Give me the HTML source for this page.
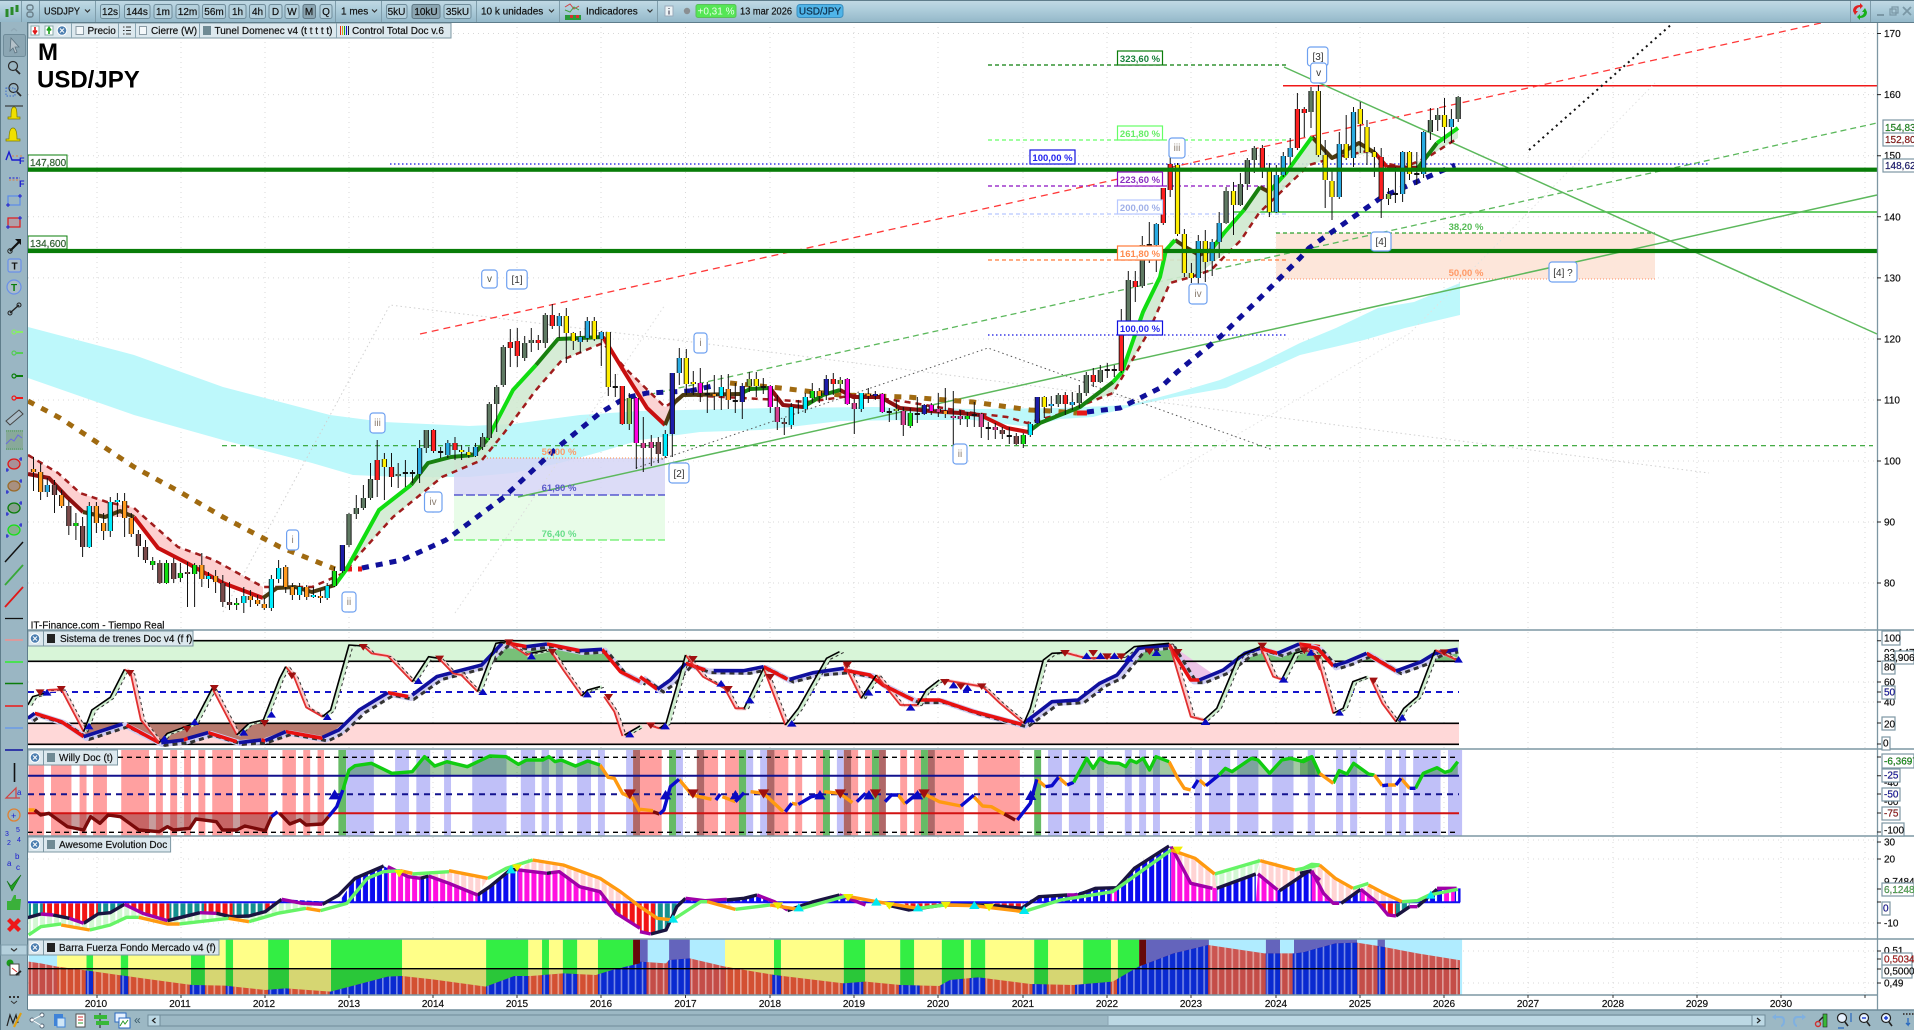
<!DOCTYPE html>
<html><head><meta charset="utf-8"><title>USD/JPY</title>
<style>
html,body{margin:0;padding:0;background:#fff;width:1914px;height:1030px;overflow:hidden}
svg{position:absolute;left:0;top:0;display:block}
svg path,svg polyline,svg line{vector-effect:non-scaling-stroke}
text{font-family:"Liberation Sans",sans-serif;font-size:10px;fill:#111}
.t{text-anchor:middle;stroke:#111;stroke-width:.2}
.a{stroke:#111;stroke-width:.2}
.w{fill:#fff;stroke:#6ea0f0;stroke-width:1.2}
.btn{fill:#b4d0dc;stroke:#6f8c9a;stroke-width:1}
.on{fill:#8ba5b1;stroke:#5f7885;stroke-width:1}
.b{fill:#fff;stroke:#7d97a3;stroke-width:1.2}
.leg{fill:#dce8ee;stroke:#7d97a3;stroke-width:1}
</style></head><body>
<svg width="1914" height="1030" viewBox="0 0 1914 1030" xmlns="http://www.w3.org/2000/svg">
<defs>
<linearGradient id="tb" x1="0" y1="0" x2="0" y2="1"><stop offset="0" stop-color="#c2dae5"/><stop offset=".5" stop-color="#abcbd9"/><stop offset="1" stop-color="#94b8c9"/></linearGradient>
<pattern id="ws" patternUnits="userSpaceOnUse" width="7.02" height="20" x="31"><rect width="2" height="20" fill="#fff"/></pattern>
<pattern id="ws2" patternUnits="userSpaceOnUse" width="7.02" height="20" x="31"><rect width="1.6" height="20" fill="#fff" fill-opacity=".45"/></pattern>
<path id="gg" d="M349 514V545M356.3 508V514M363.4 498V508M370.5 479V498M398.2 474V476M426.3 430V448M482.6 437V447M489.3 404V438M496.7 387V404M503.3 347V385M524.7 343V358M531.3 340V343M545.3 315V343M1058.3 395V404M1079.3 393V403M1086.3 375V393M1100.3 370V382M1128.3 280V321M1142.3 245V286M1226.1 191V223M1240.4 184V205M1247.3 160V184M1254.3 148V160M1311 91V112M1430.4 120V132M1437.7 115V120M1458.2 97V119"/>
<path id="rd" d="M377.2 460V480M391.5 467V477M433.5 430V451M455 443V450M510.3 342V348M517.3 341V356M538.3 340V343M552.3 315V326M622.3 386V424M833.3 379V384M1065.3 395V404M1093.3 375V382M1121.3 330V371M1135.3 281V287M1163.3 188V223M1170.2 164V190M1262.4 148V170M1297.4 109V148M1304.3 109V113M1381.2 157V199"/>
<path id="yl" d="M384.4 459V467M461.6 450V452M468.8 452V455M566.3 316V333M573.3 333V341M594.3 321V339M608.3 332V387M686.3 358V384M693.3 382V384M756.3 379V386M1044.3 397V407M1177.5 165V234M1184.4 234V273M1191.4 273V278M1205.3 241V262M1233.5 191V205M1269.4 171V212M1318.4 91V155M1325.2 155V180M1332 181V197M1346.2 144V158M1360.3 109V124M1367 127V152M1374.4 152V157M1409.5 152V174M1444.5 115V127"/>
<path id="bl" d="M47.3 485V492M419.6 448V474M447.8 443V455M475.5 447V456M559.3 316V326M580.3 337V342M587.3 321V338M601.3 332V339M679.3 358V373M1051.3 404V406M1072.3 402V405M1156.3 224V245M1198.3 241V278M1212.2 242V261M1219.2 223V242M1276.3 175V212M1283.3 156V175M1290.2 148V157M1339.3 144V197M1353.5 112V158M1402.6 152V194M1423.6 132V174M1451.4 119V127"/>
<path id="cy" d="M89.3 506V547M110.3 502V531M117.4 500V502M208.5 576V579M243.8 596V603M271.4 579V608M278.6 568V579M299.6 587V595M313.4 595V597M327.2 586V598M665.3 434V456M721.3 387V396M791.3 407V425M805.3 397V409M861.3 393V409M1030.3 424V435"/>
<path id="br" d="M54.5 485V495M68.8 506V526M82.6 526V547M138.4 534V546M145.5 547V560M159.8 563V583M173.7 563V579M187.5 572V574M222.8 583V602M229.5 602V605M658.3 442V454M784.3 422V424M1002.3 430V434M1016.3 436V444"/>
<path id="og" d="M33.5 469V472M40.6 472V492M61.6 495V506M96.4 506V523M103.6 523V531M124.6 501V518M131.3 518V534M201.8 565V579M215.6 576V582M250.4 596V600M257.6 600V604M264.3 604V608M285.7 567V587M292.4 587V595M306.7 587V597M320.5 596V598M714.3 394V396M728.3 389V400M819.3 391V396M868.3 394V396M945.3 411V414"/>
<path id="gn" d="M75.9 523V526M152.7 561V565M166.5 563V583M180.4 573V578M194.6 565V574M236.6 603V605M334.4 571V586M812.3 391V398M910.3 413V426M967.3 416V419M1023.3 435V444"/>
<path id="pk" d="M643.3 443V448M651.3 442V448M777.3 407V422M854.3 403V409M903.3 411V425M938.3 409V412M953.3 416V418M960.3 416V419M981.3 414V427M995.3 427V430"/>
<path id="mg" d="M636.3 398V443M700.3 383V393M770.3 386V407M847.3 379V404M882.3 394V412M931.3 405V411"/>
<path id="nv" d="M342.4 545V571M672.3 373V434M742.3 386V402M826.3 379V395M875.3 394V396M924.3 405V414M1037.3 397V423"/>
<path id="ol" d="M629.3 398V424M749.3 379V386M840.3 380V384M896.3 409V411M1388.5 194V199"/>
<path id="dj" d="M405.4 472V474M412.5 472V474M440.6 451V453M615.3 386V388M707.3 393V395M735.3 400V402M763.3 386V388M889.3 411V413M917.3 413V415M974.3 414V416M988.3 427V429M1009.3 435V437M1107.3 369V371M1114.3 369V371M1149.3 244V246M1395.4 193V195M1416.8 173V175"/>
<path id="tk4" d="M68 295L85 280 150 305 205 350 300 312 390 368 450 360 510 338 580 365 640 360 700 335 790 355 830 330 880 270 950 218 1000 230 1070 170 1180 135 1230 70 1290 80 1340 72 1420 92 1475 88 1520 155 1568 185"/>
<path id="tk7" d="M0 170L40 208 70 180 105 130 150 150 240 152 285 140 340 178 400 158 470 150 530 165 560 195 630 240 690 240 770 275 880 313 950 245 1010 240 1060 190 1100 165 1150 85 1220 75 1270 180 1290 180 1345 150 1395 100 1430 85 1470 100 1520 72"/>
<path id="tk5" d="M20 75L45 85 85 138 120 125 170 100 205 125 245 153 310 125 345 100 390 88"/>
<path id="r4" d="M115 210L150 208 205 335M305 148L320 160 345 300 390 368M520 205L580 345M700 140L720 170 750 262 790 290M890 78L910 100 950 108 1010 185M1075 115L1110 160 1130 165 1170 215M1240 65L1290 105 1300 100M1350 95L1380 150 1425 228M1480 230L1505 275 1525 348"/>
<path id="k4" d="M68 255L80 230 115 218M205 335L225 270 270 232 305 148M390 368L410 340 450 322 475 310 520 205M580 345L610 310 645 300 685 175 700 140M790 290L810 270 855 75 890 78M1010 185L1050 110 1075 115M1170 215L1215 70 1240 65M1300 100L1340 90M1425 228L1440 210 1470 200M1530 345L1568 318"/>
<path id="r7" d="M20 315L45 325M105 105L120 130 145 170 195 205 220 265 240 265M285 145L335 315M470 130L510 235M545 165L600 255 640 255M700 180L790 200 830 250 885 310M980 98L1030 115 1110 110M1220 70L1270 290 1300 300M1430 80L1460 170 1480 178M1550 90L1568 150"/>
<path id="k7" d="M45 325L60 310 105 105M240 265L285 145M335 315L365 265 430 115 460 95M510 235L545 165M640 255L660 210 690 180M885 310L900 265 930 120 950 100 980 98M1110 110L1140 80 1220 70M1300 300L1330 265 1380 110 1430 80M1480 178L1510 100 1550 85"/>
<path id="r5" d="M0 75L45 115 85 280M180 175L210 250 245 305M345 90L400 120"/>
<path id="k5" d="M85 280L110 265 135 185 170 170M245 305L265 265 300 230 345 90"/>
<clipPath id="env">
<polygon transform="translate(0,620) scale(.40816,.33333)" points="70,1125 70,1025 100,1030 140,1040 215,1052 290,1065 350,1075 470,1095 550,1097 650,1110 700,1105 810,1115 850,1102 950,1070 985,1068 1060,1078 1190,1100 1260,1068 1300,1068 1380,1060 1460,1065 1500,1050 1568,1030 1568,1125"/>
<polygon transform="translate(640,620) scale(.43365,.33333)" points="0,1125 0,1025 60,1030 67,1020 115,1015 196,1040 310,1065 470,1090 520,1085 600,1095 690,1098 715,1080 780,1072 900,1092 1000,1095 1090,1085 1150,1040 1230,1000 1310,975 1440,1000 1510,1000 1568,990 1568,1125"/>
<polygon transform="translate(1300,620) scale(.39154,.33333)" points="0,1125 0,1000 35,988 90,970 145,968 200,978 300,1000 415,1022 415,1125"/>
</clipPath>
</defs>

<!-- grid -->
<g stroke="#d8d8d8" stroke-width="1" stroke-dasharray="1 4" fill="none">
<path d="M28 33.5H1877M28 94.6H1877M28 155.7H1877M28 216.8H1877M28 277.9H1877M28 339H1877M28 400H1877M28 461H1877M28 522H1877M28 583H1877M28 682H1877M28 702H1877M28 840H1877M28 859H1877M28 923H1877M28 951H1877M28 983H1877"/>
<path d="M97 22V995M181 22V995M265 22V995M349 22V995M433 22V995M517 22V995M601 22V995M685.5 22V995M770 22V995M854 22V995M938 22V995M1023 22V995M1107 22V995M1191 22V995M1276 22V995M1360 22V995M1444 22V995M1528 22V995M1613 22V995M1697 22V995M1781 22V995M1865 22V995"/>
</g>

<!-- cloud -->
<polygon fill="#bdf8fb" points="28,327 134,355 223,387 330,415 384,422 469,426 513,424 580,415 640,411 773,408 873,407 973,409 1060,408 1130,405 1175,393 1220,380 1260,363 1300,343 1336,328 1378,308 1414,302 1460,283 1460,315 1405,328 1364,340 1300,355 1260,373 1226,388 1175,397 1137,405 1093,417 1060,419 1030,427 973,420 907,420 840,421 790,427 760,430 700,432 640,440 600,452 560,463 513,473 469,477 400,477 353,475 312,463 223,440 134,415 28,378"/>

<!-- fib boxes -->
<rect x="454" y="458" width="211" height="37" fill="#d6d6f6" fill-opacity=".85"/>
<rect x="454" y="495" width="211" height="45" fill="#e8fce8"/>
<rect x="1276" y="233" width="379" height="46" fill="#fde6da"/>
<g fill="none">
<path d="M454 458H665" stroke="#ff8c40" stroke-dasharray="1 2"/>
<path d="M454 495H665" stroke="#3b3bc8" stroke-width="1.2" stroke-dasharray="9 3"/>
<path d="M454 540H665" stroke="#66ee66" stroke-width="1.2" stroke-dasharray="9 3"/>
<path d="M1276 233H1655" stroke="#2ca02c" stroke-width="1.2" stroke-dasharray="4 3"/>
<path d="M1276 279H1655" stroke="#ff8c60" stroke-dasharray="1 2"/>
<path d="M222 445.7H1873" stroke="#2ca02c" stroke-width="1.2" stroke-dasharray="5 4"/>
<path d="M988 65H1288" stroke="#0b7d0b" stroke-width="1.2" stroke-dasharray="4 3"/>
<path d="M988 140H1288" stroke="#66ff66" stroke-width="1.2" stroke-dasharray="4 3"/>
<path d="M988 186H1288" stroke="#8a0fc0" stroke-width="1.2" stroke-dasharray="4 3"/>
<path d="M988 214H1288" stroke="#b8c8ff" stroke-width="1.2" stroke-dasharray="4 3"/>
<path d="M988 260H1288" stroke="#ff7a3a" stroke-width="1.2" stroke-dasharray="4 3"/>
<path d="M988 335H1288" stroke="#1010e0" stroke-width="1.2" stroke-dasharray="1.5 2.5"/>
<path d="M390 164H1708" stroke="#1010e0" stroke-width="1.2" stroke-dasharray="1.5 2.5"/>
<path d="M1234 212H1877" stroke="#33bb33" stroke-width="1.4"/>
<path d="M1283 85.7H1877" stroke="#f01818" stroke-width="1.5"/>
<!-- faint diagonals -->
<path d="M223 612L390 305L700 343L1709 473" stroke="#d0d0d0" stroke-dasharray="1.5 3"/>
<path d="M455 613L665 305" stroke="#dcdcdc" stroke-dasharray="1.5 3"/>
<path d="M1160 480L1410 333L1655 83" stroke="#e2e2e2" stroke-dasharray="1.5 3"/>
<path d="M636 468L988 348L1273 450" stroke="#555" stroke-dasharray="1.5 3"/>
<path d="M1529 150L1673 23" stroke="#111" stroke-width="2" stroke-dasharray="2 4"/>
<!-- trend lines -->
<path d="M420 334L1821 23" stroke="#ff3838" stroke-width="1.3" stroke-dasharray="7 5"/>
<path d="M620 401L1877 123" stroke="#5cb85c" stroke-width="1.3" stroke-dasharray="6 4"/>
<path d="M518 497L1877 195" stroke="#5cb85c" stroke-width="1.5"/>
<path d="M1284 67L1877 334" stroke="#5cb85c" stroke-width="1.5"/>
</g>

<!-- tunnel fills -->
<polygon fill="#fdd0d0" points="28,455 58,473 80,493 107,502 134,508 178,547 214,560 263,587 263,598 223,583 187,563 158,548 134,517 105,517 83,512 67,497 49,478 28,474"/>
<polygon fill="#cfe9cf" fill-opacity=".85" points="346,570 379,510 411,485 428,463 451,457 473,455 487,440 513,390 536,365 558,339 580,338 603,337 603,343 562,360 536,390 504,433 482,460 442,477 393,517 357,557"/>
<polygon fill="#fbcfcf" fill-opacity=".9" points="603,337 625,373 647,408 665,425 674,403 683,395 665,407 625,368 603,343"/>
<polygon fill="#cfe9cf" fill-opacity=".9" points="1028,432 1040,423 1080,407 1113,382 1122,372 1143,312 1160,277 1170,240 1175,240 1187,248 1199,255 1211,250 1224,233 1244,210 1260,187 1269,192 1286,173 1312,137 1332,158 1359,143 1375,153 1337,157 1309,165 1259,213 1241,240 1200,273 1191,277 1170,283 1148,333 1113,393 1057,415"/>
<polygon fill="#cfe9cf" fill-opacity=".9" points="1418,168 1437,143 1458,128 1458,138 1428,157 1405,167"/>

<!-- long MA dashed -->
<g fill="none" stroke-width="5">
<path d="M28 401L60 418 95 441 134 467 180 492 223 517 280 547 335 569" stroke="#a06a10" stroke-dasharray="7 8"/>
<path d="M345 569H362" stroke="#e81818" stroke-dasharray="7 6"/>
<path d="M362 568L402 560 446 540 504 497 558 447 600 413 625 398 647 393 690 391" stroke="#10109a" stroke-dasharray="7 7"/>
<path d="M690 391L717 385" stroke="#10109a" stroke-dasharray="7 7"/>
<path d="M730 383L780 388 840 395 907 397 973 402 1030 410 1050 411 1077 413" stroke="#a06a10" stroke-dasharray="7 8"/>
<path d="M1077 413H1087" stroke="#e81818"/>
<path d="M1087 412L1120 408 1160 388 1177 372 1220 337 1260 298 1300 258 1309 248 1382 197 1455 165" stroke="#10109a" stroke-dasharray="7 7"/>
</g>

<!-- tunnel lower dashed -->
<path fill="none" stroke="#a01c1c" stroke-width="2.5" stroke-dasharray="6 5" d="M28 455L58 473 80 493 107 502 134 508 178 547 214 560 263 587 312 587 344 573 357 557 393 517 442 477 482 460 504 433 536 390 562 360 603 343 625 368 665 407 683 395 723 397 780 400 807 402 857 395 907 402 973 413 1007 417 1027 423 1057 415 1113 393 1148 333 1170 283 1191 277 1211 270 1241 240 1259 213 1309 165 1337 157 1373 150 1382 163 1405 167 1428 157 1458 138"/>

<!-- tunnel main -->
<g fill="none" stroke-width="4" stroke-linejoin="round">
<path stroke="#8e1010" d="M28 474L49 478 67 497 83 512M840 390L853 397 880 397 900 408 930 411 960 413 980 415M770 388L783 405 803 407M1387 167L1418 168"/>
<path stroke="#c80f0f" d="M134 517L158 548 187 563 223 583 263 598M980 415L1007 428 1028 432M603 337L625 373 647 408 665 425M1375 153L1387 167"/>
<path stroke="#4d3a10" d="M83 512L105 517 120 511 134 517M263 598L277 588 295 587 312 592 335 585M665 425L674 403 683 395 740 394M1175 240L1187 248 1199 255 1211 250M1260 187L1269 192M1312 137L1332 158 1359 143 1375 153"/>
<path stroke="#18800f" d="M411 485L428 463 451 457 473 455 487 440M536 365L558 339 603 337M740 394L750 389 770 388M803 407L823 395 840 390M1028 432L1040 423 1080 407 1113 382M1244 210L1260 187M1418 168L1437 143"/>
<path stroke="#11dd11" d="M335 585L346 570 379 510 411 485M487 440L513 390 536 365M1113 382L1122 372 1143 312 1160 277 1166 250 1175 240M1211 250L1224 233 1244 210M1269 192L1286 173 1312 137M1437 143L1458 128"/>
</g>

<!-- candle wicks -->
<path fill="none" stroke="#111" stroke-width="1" d="M33.5 457V491M40.6 463V500M47.3 478V497M54.5 480V513M61.6 490V508M68.8 500V535M75.9 513V540M82.6 517V557M89.3 502V548M96.4 502V533M103.6 513V540M110.3 497V537M117.4 493V517M124.6 493V537M131.3 513V537M138.4 530V557M145.5 540V563M152.7 557V570M159.8 560V584M166.5 560V584M173.7 558V583M180.4 563V582M187.5 562V607M194.6 563V607M201.8 553V587M208.5 572V588M215.6 570V593M222.8 575V607M229.5 582V610M236.6 598V610M243.8 587V613M250.4 590V607M257.6 595V606M264.3 598V610M271.4 575V611M278.6 560V583M285.7 565V593M292.4 583V600M299.6 583V600M306.7 585V600M313.4 587V598M320.5 590V603M327.2 583V600M334.4 567V587M342.4 545V573M349 513V547M356.3 495V519M363.4 485V510M370.5 463V500M377.2 440V497M384.4 453V500M391.5 453V487M398.2 463V488M405.4 460V487M412.5 470V483M419.6 440V483M426.3 430V453M433.5 429V453M440.6 447V458M447.8 440V458M455 437V460M461.6 445V460M468.8 447V458M475.5 443V457M482.6 433V450M489.3 402V440M496.7 385V432M503.3 345V387M510.3 329V367M517.3 328V367M524.7 336V361M531.3 328V352M538.3 335V350M545.3 313V348M552.3 304V329M559.3 313V338M566.3 308V363M573.3 332V350M580.3 331V353M587.3 317V342M594.3 317V341M601.3 331V366M608.3 332V396M615.3 374V397M622.3 386V425M629.3 393V430M636.3 397V469M643.3 417V472M651.3 435V466M658.3 437V463M665.3 430V458M672.3 373V457M679.3 348V385M686.3 349V395M693.3 371V395M700.3 368V402M707.3 382V413M714.3 375V410M721.3 375V410M728.3 374V409M735.3 383V413M742.3 383V419M749.3 372V392M756.3 372V397M763.3 378V394M770.3 385V413M777.3 395V430M784.3 418V435M791.3 403V429M798.3 400V414M805.3 393V413M812.3 383V403M819.3 388V403M826.3 375V400M833.3 373V395M840.3 377V392M847.3 378V405M854.3 399V434M861.3 393V412M868.3 388V403M875.3 391V400M882.3 393V413M889.3 408V422M896.3 400V420M903.3 407V436M910.3 408V428M917.3 397V423M924.3 404V415M931.3 403V415M938.3 393V417M945.3 388V418M953.3 391V445M960.3 410V425M967.3 412V427M974.3 402V427M981.3 413V438M988.3 422V440M995.3 423V439M1002.3 427V439M1009.3 427V444M1016.3 433V445M1023.3 433V448M1030.3 422V437M1037.3 397V424M1044.3 396V418M1051.3 396V413M1058.3 393V407M1065.3 392V415M1072.3 392V410M1079.3 385V408M1086.3 372V396M1093.3 368V387M1100.3 365V383M1107.3 363V378M1114.3 365V377M1121.3 309V373M1128.3 271V323M1135.3 271V302M1142.3 236V288M1149.3 222V263M1156.3 223V272M1163.3 188V225M1170.2 140V197M1177.5 163V236M1184.4 229V277M1191.4 263V283M1198.3 235V293M1205.3 230V282M1212.2 239V276M1219.2 212V258M1226.1 187V224M1233.5 182V235M1240.4 173V206M1247.3 158V190M1254.3 146V173M1262.4 145V178M1269.4 163V217M1276.3 165V213M1283.3 152V177M1290.2 138V165M1297.4 93V150M1304.3 107V137M1311 87V128M1318.4 85V157M1325.2 140V208M1332 170V220M1339.3 132V199M1346.2 115V160M1353.5 107V167M1360.3 102V153M1367 120V165M1374.4 147V177M1381.2 148V218M1388.5 188V205M1395.4 167V203M1402.6 151V202M1409.5 151V180M1416.8 152V185M1423.6 131V178M1430.4 108V140M1437.7 108V131M1444.5 98V143M1451.4 109V143M1458.2 96V122"/>
<!-- candle bodies -->
<g fill="none" stroke="#111" stroke-width="5.2"><use href="#gg"/><use href="#rd"/><use href="#yl"/><use href="#bl"/><use href="#cy"/><use href="#br"/><use href="#og"/><use href="#gn"/><use href="#pk"/><use href="#mg"/><use href="#nv"/><use href="#ol"/><use href="#dj"/></g>
<g fill="none" stroke-width="3.4"><use href="#gg" stroke="#5f7a63"/><use href="#rd" stroke="#ff2020"/><use href="#yl" stroke="#ffee00"/><use href="#bl" stroke="#29abe2"/><use href="#cy" stroke="#00eeff"/><use href="#br" stroke="#7b4a4a"/><use href="#og" stroke="#ff9a1f"/><use href="#gn" stroke="#11dd11"/><use href="#pk" stroke="#d6408f"/><use href="#mg" stroke="#ff00e0"/><use href="#nv" stroke="#1c1caa"/><use href="#ol" stroke="#8fbc44"/></g>

<!-- thick green levels -->
<rect x="28" y="167.6" width="1849" height="4.2" fill="#087d08"/>
<rect x="28" y="248.9" width="1849" height="4.2" fill="#087d08"/>
<rect x="28" y="155" width="39" height="13" fill="#fff" stroke="#087d08"/>
<rect x="28" y="236" width="39" height="13" fill="#fff" stroke="#087d08"/>
<text x="30" y="166" style="fill:#3d8a40" class="a">147,800</text>
<text x="30" y="247" style="fill:#3d8a40" class="a">134,600</text>

<!-- fib labels -->
<g fill="#fff" stroke-width="1.2">
<rect x="1117.5" y="51" width="45" height="14" stroke="#0b7d0b"/>
<rect x="1117.5" y="126" width="45" height="14" stroke="#66ff66"/>
<rect x="1117.5" y="172" width="45" height="14" stroke="#8a0fc0"/>
<rect x="1117.5" y="200" width="45" height="14" stroke="#b8c8ff"/>
<rect x="1117.5" y="246" width="45" height="14" stroke="#ff7a3a"/>
<rect x="1117.5" y="321" width="45" height="14" stroke="#1010e0"/>
<rect x="1030" y="150" width="45" height="14" stroke="#1010e0"/>
</g>
<g>
<text x="1140" y="62" text-anchor="middle" style="fill:#17813a;font-weight:bold;font-size:9.5px">323,60 %</text>
<text x="1140" y="137" text-anchor="middle" style="fill:#66ee66;font-weight:bold;font-size:9.5px">261,80 %</text>
<text x="1140" y="183" text-anchor="middle" style="fill:#8a2fc0;font-weight:bold;font-size:9.5px">223,60 %</text>
<text x="1140" y="211" text-anchor="middle" style="fill:#a0b0e8;font-weight:bold;font-size:9.5px">200,00 %</text>
<text x="1140" y="257" text-anchor="middle" style="fill:#ff8c50;font-weight:bold;font-size:9.5px">161,80 %</text>
<text x="1140" y="332" text-anchor="middle" style="fill:#2222ee;font-weight:bold;font-size:9.5px">100,00 %</text>
<text x="1052.5" y="161" text-anchor="middle" style="fill:#2222ee;font-weight:bold;font-size:9.5px">100,00 %</text>
<text x="559" y="455" text-anchor="middle" style="fill:#ff9a66;font-weight:bold;font-size:9.5px">50,00 %</text>
<text x="559" y="491" text-anchor="middle" style="fill:#5a5ac8;font-weight:bold;font-size:9.5px">61,80 %</text>
<text x="559" y="537" text-anchor="middle" style="fill:#66dd88;font-weight:bold;font-size:9.5px">76,40 %</text>
<text x="1466" y="230" text-anchor="middle" style="fill:#55bb55;font-weight:bold;font-size:9.5px">38,20 %</text>
<text x="1466" y="276" text-anchor="middle" style="fill:#ff9966;font-weight:bold;font-size:9.5px">50,00 %</text>
</g>

<!-- wave labels -->
<g>
<rect class="w" x="286.6" y="530" width="12" height="20" rx="3"/><rect class="w" x="342" y="592" width="14" height="20" rx="3"/><rect class="w" x="370" y="413" width="15" height="20" rx="3"/><rect class="w" x="424.5" y="492" width="17.5" height="20" rx="3"/><rect class="w" x="481.7" y="270" width="15.5" height="18" rx="3"/><rect class="w" x="506.7" y="270" width="20.5" height="19" rx="3"/><rect class="w" x="669" y="463" width="20" height="20" rx="3"/><rect class="w" x="694" y="333" width="13" height="20" rx="3"/><rect class="w" x="953" y="444" width="14" height="20" rx="3"/><rect class="w" x="1169" y="138" width="16" height="20" rx="3"/><rect class="w" x="1189" y="284" width="18" height="20" rx="3"/><rect class="w" x="1307.5" y="47" width="20.5" height="19" rx="3"/><rect class="w" x="1310.6" y="63" width="16" height="20" rx="3"/><rect class="w" x="1371" y="232" width="20" height="19" rx="3"/><rect class="w" x="1549" y="262" width="28" height="20" rx="3"/>
<text x="292.6" y="543" text-anchor="middle" style="fill:#8a7d70">i</text><text x="349" y="605" text-anchor="middle" style="fill:#8a7d70">ii</text><text x="377.5" y="426" text-anchor="middle" style="fill:#8a7d70">iii</text><text x="433" y="505" text-anchor="middle" style="fill:#8a7d70">iv</text><text x="489.5" y="282" text-anchor="middle" style="fill:#554">v</text><text x="517" y="283" text-anchor="middle" style="fill:#333">[1]</text><text x="679" y="477" text-anchor="middle" style="fill:#333">[2]</text><text x="700.5" y="346" text-anchor="middle" style="fill:#8a7d70">i</text><text x="960" y="457" text-anchor="middle" style="fill:#8a7d70">ii</text><text x="1177" y="151" text-anchor="middle" style="fill:#8a7d70">iii</text><text x="1198" y="297" text-anchor="middle" style="fill:#8a7d70">iv</text><text x="1318" y="60" text-anchor="middle" style="fill:#333">[3]</text><text x="1318.6" y="76" text-anchor="middle" style="fill:#333">v</text><text x="1381" y="245" text-anchor="middle" style="fill:#333">[4]</text><text x="1563" y="276" text-anchor="middle" style="fill:#333">[4] ?</text>
</g>

<text x="38" y="60" style="font-size:24px;font-weight:bold;fill:#000">M</text>
<text x="37" y="87.5" style="font-size:24px;font-weight:bold;fill:#000">USD/JPY</text>
<text x="30.6" y="628.5" class="a">IT-Finance.com - Tiempo Real</text>

<!-- PANEL 1 -->
<rect x="28" y="641" width="1431" height="20" fill="#d8f5d8"/>
<rect x="28" y="723" width="1431" height="21" fill="#ffd8d8"/>
<g transform="translate(0,620) scale(.40816,.33333)">
<polygon fill="#b87a6e" points="205,310 840,310 800,352 700,335 640,360 580,365 510,338 450,360 390,368 310,315 205,350"/>
<polygon fill="#78c078" points="1190,124 1235,66 1290,80 1340,72 1420,92 1475,88 1500,124"/>
</g>
<g transform="translate(640,620) scale(.43365,.33333)">
<polygon fill="#78c078" points="1130,124 1160,80 1220,72 1230,124"/><polygon fill="#78c078" points="1385,124 1430,80 1470,100 1520,72 1568,80 1568,124"/>
<polygon fill="#ecc4e8" points="1225,75 1270,180 1290,180 1330,170"/>
</g>
<g transform="translate(1300,620) scale(.39154,.33333)">
<polygon fill="#78c078" points="0,124 0,75 45,85 60,124"/><polygon fill="#78c078" points="120,124 170,100 190,124"/><polygon fill="#78c078" points="330,124 345,100 400,88 405,124"/>
</g>
<g fill="none" stroke-width="1.6">
<path d="M28 640.7H1459M28 661.3H1459M28 723.3H1459M28 744.3H1459" stroke="#000"/>
<path d="M28 692H1459" stroke="#1515cc" stroke-width="2" stroke-dasharray="6 5"/>
</g>
<g fill="none" stroke-linejoin="round">
<!-- zoom 4 -->
<g transform="translate(0,620) scale(.40816,.33333)">
<use href="#tk4" stroke="#cfcdf0" stroke-width="6" transform="translate(7,4)"/>
<use href="#tk4" stroke="#333" stroke-width="3" stroke-dasharray="5 4" transform="translate(14,8)"/>
<use href="#r4" stroke="#fbcaca" stroke-width="3.5" transform="translate(5,1)"/>
<use href="#k4" stroke="#cfeecf" stroke-width="3.5" transform="translate(5,1)"/>
<use href="#r4" stroke="#333" stroke-width="1" stroke-dasharray="3 3" transform="translate(10,2)"/>
<use href="#k4" stroke="#333" stroke-width="1" stroke-dasharray="3 3" transform="translate(10,2)"/>
<path stroke="#e81010" stroke-width="3.6" d="M85 280L150 305 205 350M310 315L390 368M450 360L460 355M510 338L580 365M640 360L650 362M700 335L790 355M950 218L1000 230M1240 68L1290 80M1340 72L1420 92M1475 88L1520 155 1568 185"/>
<path stroke="#10109e" stroke-width="3.6" d="M68 295L85 280M205 350L300 312M395 368L450 360M460 355L510 338M585 368L640 360M650 362L700 335M790 352L830 330 880 270 950 218M1010 225L1070 170 1180 135 1230 70M1290 80L1340 72M1420 92L1475 88"/>
<use href="#r4" stroke="#e03030" stroke-width="1.8"/>
<use href="#k4" stroke="#000" stroke-width="1.6"/>
<path fill="#0a0ac0" stroke="none" d="M104 227l22 0 -11 -20zM207 328l22 0 -11 -20zM392 365l22 0 -11 -20zM466 315l22 0 -11 -20zM586 347l22 0 -11 -20zM654 293l22 0 -11 -20zM791 300l22 0 -11 -20zM1014 192l22 0 -11 -20zM1172 225l22 0 -11 -20zM1291 118l22 0 -11 -20zM1428 232l22 0 -11 -20zM1532 352l22 0 -11 -20z"/>
<path fill="#a01010" stroke="none" d="M87 208l22 0 -11 20zM139 198l22 0 -11 20zM307 150l22 0 -11 20zM447 318l22 0 -11 20zM514 195l22 0 -11 20zM637 300l22 0 -11 20zM704 158l22 0 -11 20zM879 72l22 0 -11 20zM1066 107l22 0 -11 20zM1236 58l22 0 -11 20zM1342 87l22 0 -11 20zM1480 222l22 0 -11 20z"/>
</g>
<!-- zoom 7 -->
<g transform="translate(640,620) scale(.43365,.33333)">
<use href="#tk7" stroke="#cfcdf0" stroke-width="6" transform="translate(7,4)"/>
<use href="#tk7" stroke="#333" stroke-width="3" stroke-dasharray="5 4" transform="translate(14,8)"/>
<use href="#r7" stroke="#fbcaca" stroke-width="3.5" transform="translate(5,1)"/>
<use href="#k7" stroke="#cfeecf" stroke-width="3.5" transform="translate(5,1)"/>
<use href="#r7" stroke="#333" stroke-width="1" stroke-dasharray="3 3" transform="translate(10,2)"/>
<use href="#k7" stroke="#333" stroke-width="1" stroke-dasharray="3 3" transform="translate(10,2)"/>
<path stroke="#e81010" stroke-width="3.6" d="M0 170L40 208M105 130L150 150M285 140L340 178M470 150L530 165 560 195 630 240M640 240L690 240 770 275 880 313M1220 75L1270 180 1290 180M1430 85L1470 100M1520 72L1568 80"/>
<path stroke="#10109e" stroke-width="3.6" d="M40 208L70 180 105 130M170 152L240 152 285 140M345 178L400 158 470 145M885 310L950 245 1010 240 1060 190 1100 165 1150 85 1220 75M1290 180L1345 150 1395 100 1430 85M1470 100L1520 72"/>
<use href="#r7" stroke="#e03030" stroke-width="1.8"/>
<use href="#k7" stroke="#000" stroke-width="1.6"/>
<path fill="#0a0ac0" stroke="none" d="M47 328l22 0 -11 -20zM176 200l22 0 -11 -20zM242 250l22 0 -11 -20zM339 320l22 0 -11 -20zM516 227l22 0 -11 -20zM613 272l22 0 -11 -20zM712 205l22 0 -11 -20zM744 213l22 0 -11 -20zM889 307l22 0 -11 -20zM1019 117l22 0 -11 -20zM1051 117l22 0 -11 -20zM1083 117l22 0 -11 -20zM1116 125l22 0 -11 -20zM1180 108l22 0 -11 -20zM1293 315l22 0 -11 -20zM1473 188l22 0 -11 -20zM1537 107l22 0 -11 -20z"/>
<path fill="#a01010" stroke="none" d="M14 307l22 0 -11 20zM111 108l22 0 -11 20zM192 198l22 0 -11 20zM289 162l22 0 -11 20zM467 125l22 0 -11 20zM692 177l22 0 -11 20zM729 190l22 0 -11 20zM777 190l22 0 -11 20zM969 90l22 0 -11 20zM1034 90l22 0 -11 20zM1066 100l22 0 -11 20zM1099 100l22 0 -11 20zM1164 85l22 0 -11 20zM1229 87l22 0 -11 20zM1424 68l22 0 -11 20zM1521 82l22 0 -11 20z"/>
</g>
<!-- zoom 5 -->
<g transform="translate(1300,620) scale(.39154,.33333)">
<use href="#tk5" stroke="#cfcdf0" stroke-width="6" transform="translate(7,4)"/>
<use href="#tk5" stroke="#333" stroke-width="3" stroke-dasharray="5 4" transform="translate(14,8)"/>
<use href="#r5" stroke="#fbcaca" stroke-width="3.5" transform="translate(5,1)"/>
<use href="#k5" stroke="#cfeecf" stroke-width="3.5" transform="translate(5,1)"/>
<use href="#r5" stroke="#333" stroke-width="1" stroke-dasharray="3 3" transform="translate(10,2)"/>
<use href="#k5" stroke="#333" stroke-width="1" stroke-dasharray="3 3" transform="translate(10,2)"/>
<path stroke="#e81010" stroke-width="3.6" d="M0 75L45 85 85 138M170 100L205 125 245 153"/>
<path stroke="#10109e" stroke-width="3.6" d="M85 138L120 125 170 100M245 153L310 125 345 100 403 88"/>
<use href="#r5" stroke="#e03030" stroke-width="1.8"/>
<use href="#k5" stroke="#000" stroke-width="1.6"/>
<path fill="#0a0ac0" stroke="none" d="M17 107l22 0 -11 -20zM90 287l22 0 -11 -20zM250 302l22 0 -11 -20zM394 128l22 0 -11 -20z"/>
<path fill="#a01010" stroke="none" d="M0 82l22 0 -11 20zM34 105l22 0 -11 20zM177 173l22 0 -11 20zM357 88l22 0 -11 20z"/>
</g>
</g>

<!-- PANEL 2 stripes -->
<g transform="translate(0,620) scale(.40816,.33333)" fill="#ffa0a0">
<path d="M70 390H108V648H70zM125 390H175V648H125zM195 390H212V648H195zM228 390H262V648H228zM297 390H365V648H297zM382 390H399V648H382zM417 390H434V648H417zM451 390H468V648H451zM486 390H503V648H486zM520 390H571V648H520zM588 390H657V648H588zM692 390H725V648H692zM743 390H760V648H743zM778 390H794V648H778z"/>
<path fill="#66bb66" d="M829 390H848V648H829z"/>
<path fill="#c0c0f8" d="M848 390H916V648H848zM968 390H1002V648H968zM1020 390H1054V648H1020zM1088 390H1105V648H1088zM1157 390H1241V648H1157zM1276 390H1311V648H1276zM1327 390H1345V648H1327zM1362 390H1379V648H1362zM1414 390H1448V648H1414zM1465 390H1482V648H1465zM1534 390H1551V648H1534z"/>
<path fill="#b06868" d="M1551 390H1568V648H1551z"/>
</g>
<g transform="translate(640,620) scale(.43365,.33333)" fill="#ffa0a0">
<path d="M0 390H50V648H0zM148 390H180V648H148zM196 390H228V648H196zM310 390H342V648H310zM358 390H374V648H358zM406 390H422V648H406zM487 390H503V648H487zM519 390H535V648H519zM600 390H616V648H600zM632 390H648V648H632zM680 390H747V648H680zM779 390H876V648H779z"/>
<path fill="#66bb66" d="M67 390H83V648H67zM228 390H245V648H228zM422 390H438V648H422zM535 390H551V648H535zM648 390H664V648H648zM909 390H925V648H909z"/>
<path fill="#c0c0f8" d="M83 390H99V648H83zM245 390H261V648H245zM277 390H293V648H277zM454 390H470V648H454zM941 390H973V648H941zM989 390H1038V648H989zM1054 390H1070V648H1054zM1118 390H1134V648H1118zM1151 390H1167V648H1151zM1183 390H1199V648H1183zM1280 390H1296V648H1280zM1312 390H1361V648H1312zM1377 390H1426V648H1377zM1458 390H1507V648H1458zM1540 390H1556V648H1540z"/>
<path fill="#b06868" d="M131 390H148V648H131zM293 390H310V648H293zM470 390H487V648H470zM551 390H567V648H551zM664 390H680V648H664z"/>
</g>
<g transform="translate(1300,620) scale(.39154,.33333)" fill="#c0c0f8">
<path d="M20 390H38V648H20zM92 390H110V648H92zM128 390H146V648H128zM217 390H235V648H217zM253 390H271V648H253zM289 390H359V648H289zM378 390H414V648H378z"/>
</g>
<!-- panel 2 fills -->
<g transform="translate(0,620) scale(.40816,.33333)">
<polygon fill="#7a1414" fill-opacity=".42" points="100,580 120,580 165,620 205,630 222,590 245,610 265,585 295,590 340,630 390,635 410,620 425,630 465,625 480,597 530,605 545,630 580,630 600,618 650,632 665,590 670,580"/>
<polygon fill="#7a1414" fill-opacity=".42" points="690,580 710,612 735,600 750,615 790,612 805,590 812,580"/>
<polygon fill="#187818" fill-opacity=".4" points="850,467 855,450 870,437 910,430 960,460 1010,455 1040,410 1065,438 1095,425 1145,440 1200,408 1240,410 1270,433 1290,420 1330,420 1345,410 1360,425 1375,420 1410,438 1440,423 1470,435 1485,467"/>
</g>
<g transform="translate(640,620) scale(.43365,.33333)">
<polygon fill="#187818" fill-opacity=".4" points="1005,467 1030,415 1045,445 1060,415 1080,428 1105,430 1120,440 1130,420 1145,428 1160,415 1175,450 1190,410 1220,425 1235,467"/>
<polygon fill="#187818" fill-opacity=".4" points="1335,467 1350,445 1365,455 1410,415 1425,420 1452,460 1480,420 1500,415 1530,425 1550,412 1568,465"/>
</g>
<g transform="translate(1300,620) scale(.39154,.33333)">
<polygon fill="#187818" fill-opacity=".4" points="0,467 0,425 30,410 50,460 60,467"/>
<polygon fill="#187818" fill-opacity=".4" points="97,467 100,452 120,462 137,430 175,462 190,467"/>
<polygon fill="#187818" fill-opacity=".4" points="312,467 315,460 350,443 370,457 385,452 403,425 403,467"/>
</g>
<g fill="none">
<path d="M28 757.3H1459M28 832.3H1459" stroke="#000" stroke-width="1.3" stroke-dasharray="5 4"/>
<path d="M28 775.7H1459" stroke="#12128e" stroke-width="2"/>
<path d="M28 794.3H1459" stroke="#12128e" stroke-width="2" stroke-dasharray="6 5"/>
<path d="M28 813.3H1459" stroke="#d21212" stroke-width="2"/>
</g>
<g fill="none" stroke-width="3.4" stroke-linejoin="round">
<g transform="translate(0,620) scale(.40816,.33333)">
<path stroke="#ff9a10" d="M70 570H85M1470 435L1490 472 1505 475 1525 520 1550 535 1568 575"/>
<path stroke="#7a0a0a" d="M85 570L100 585 120 580 165 620 205 630 222 590 245 610 265 585 295 590 340 630 390 635 410 620 425 630 465 625 480 597 530 605 545 630 580 630 600 618 650 632 665 590M685 580L710 612 735 600 750 615 790 612 805 590"/>
<path stroke="#0a0acc" d="M665 590L680 575M805 590L825 560 840 510"/>
<path stroke="#11cc11" d="M840 510L855 450 870 437 910 430 960 460 1010 455 1040 410 1065 438 1095 425 1145 440 1200 408 1240 410 1270 433 1290 420 1330 420 1345 410 1360 425 1375 420 1410 438 1440 423 1470 435"/>
<path fill="#0a0ac0" stroke="none" d="M805 538l30 0 -15 -30z"/><path fill="#a01010" stroke="none" d="M1528 508l30 0 -15 30z"/>
</g>
<g transform="translate(640,620) scale(.43365,.33333)">
<path stroke="#ff9a10" d="M0 568L30 572M90 478L120 525 165 538M190 530L220 545M255 515L285 520 330 575M350 550L362 553M425 515L460 520 490 548M595 525L612 552M660 525L690 545 740 558M770 530L790 558 810 560 840 582M915 478L935 500M965 472L985 495M1220 425L1240 475 1255 505 1270 510M1290 480L1305 497"/>
<path stroke="#7a0a0a" d="M30 575L45 582M840 582L865 600"/>
<path stroke="#0a0acc" d="M45 582L55 570 70 500 90 478M175 540L185 522M220 545L240 518M335 575L350 550M365 553L395 530 415 525M500 545L520 520M565 545L580 525 595 525M612 550L640 520M740 558L770 525M870 600L900 550 915 478M935 500L950 497 965 472M985 495L1000 487M1275 505L1287 480M1305 497L1335 465"/>
<path stroke="#11cc11" d="M1000 487L1030 415 1045 445 1060 415 1080 428 1105 430 1120 440 1130 420 1145 428 1160 415 1175 450 1190 410 1220 425M1335 465L1350 445 1365 455 1410 415 1425 420 1452 460 1480 420 1500 415 1530 425 1550 412 1568 465"/>
<path fill="#0a0ac0" stroke="none" d="M46 538l26 0 -13 -28zM207 538l26 0 -13 -28zM402 538l26 0 -13 -28zM515 538l26 0 -13 -28zM627 538l26 0 -13 -28zM888 540l26 0 -13 -30z"/>
<path fill="#a01010" stroke="none" d="M109 508l26 0 -13 28zM272 508l26 0 -13 28zM449 508l26 0 -13 28zM530 508l26 0 -13 28zM642 508l26 0 -13 28z"/>
</g>
<g transform="translate(1300,620) scale(.39154,.33333)">
<path stroke="#11cc11" d="M0 425L30 410 50 460M85 490L100 452 120 462 137 430 175 462 190 465M295 505L315 460 350 443 370 457 385 452 403 425"/>
<path stroke="#ff9a10" d="M50 460L85 490M190 465L210 497M225 495L245 495M258 475L280 505"/>
<path stroke="#0a0acc" d="M210 497L225 495M245 495L258 475M280 505L295 505"/>
</g>
</g>

<!-- PANEL 3 pale -->
<g transform="translate(0,620) scale(.40816,.33333)">
<polygon fill="#d4f8d4" points="70,893 100,882 130,885 170,895 205,910 240,882 270,878 305,853 350,880 410,902 450,890 490,878 530,880 565,890 610,888 650,875 690,838 780,855 750,865 680,880 610,905 560,895 440,912 410,912 340,892 310,892 270,915 220,930 150,912 100,920 70,945"/>
<polygon fill="#ffd4d4" points="950,740 1000,770 1100,790 1170,825 1195,775 1100,752 1010,760 980,752 940,755"/>
<polygon fill="#ffd4d4" points="1305,720 1380,735 1470,775 1520,815 1568,860 1568,920 1510,880 1490,847 1470,815 1420,800 1370,755 1270,750"/>
<!-- bars -->
<path fill="#14908e" d="M70 850H105V885L70 893zM240 850H305V853L270 878 240 882zM415 850H500V880L450 890 415 902zM570 850H650V875L610 888 570 890z"/>
<path fill="#f21414" d="M105 850H240V882L205 910 170 895 130 885 105 884zM305 850H415V902L350 880 305 853zM500 850H570V890L530 880 500 879zM650 850H680V848L650 875zM1490 850H1568V925L1510 880z"/>
<path fill="#0a0af0" d="M830 847L870 775 940 738 950 745V847zM1030 847V775L1050 768V847zM1170 847V825L1200 800 1250 750 1270 748V847zM690 847L700 838 830 847z"/>
<path fill="#ff10e0" d="M950 847V740L1000 770 1030 775V847zM1050 847V768L1100 790 1170 825V847zM1270 847V750L1340 760 1370 755 1420 800 1470 815 1490 847z"/>
</g>
<g transform="translate(640,620) scale(.43365,.33333)">
<polygon fill="#ffd4d4" points="1225,690 1280,715 1325,762 1330,805 1320,805 1270,790"/>
<polygon fill="#d4f8d4" points="1325,762 1430,722 1420,762 1370,785 1330,805"/>
<polygon fill="#ffd4d4" points="1430,722 1510,750 1540,755 1475,812 1425,762"/>
<polygon fill="#d4f8d4" points="1510,750 1568,735 1568,780 1545,755"/>
<polygon fill="#ffd4d4" points="105,835 155,845 220,868 200,845"/>
<path fill="#f21414" d="M0 850V935L25 942 35 940V850zM610 850L620 870 700 855V850zM800 850L880 865 885 850z"/>
<path fill="#14908e" d="M35 850V940L60 930 85 860V850z"/>
<path fill="#0a0af0" d="M85 847L105 835 150 842 200 840 240 835 270 825 310 847zM400 847L460 825 520 847zM885 847L920 830 985 825 1050 805 1085 805V847zM1100 847V803L1140 745 1225 678V847zM1330 847V805L1370 785 1420 762V847zM1470 847V812L1540 755 1545 847z"/>
<path fill="#ff10e0" d="M1085 847V810L1100 805V847zM1225 847V680L1270 790 1330 805V847zM1420 847L1425 762 1470 810V847zM1545 847V755L1568 780V847z"/>
</g>
<g transform="translate(1300,620) scale(.39154,.33333)">
<polygon fill="#ffd4d4" points="50,735 90,775 135,805 155,808 100,850 85,850 60,820 30,752"/>
<polygon fill="#ffd4d4" points="175,795 215,820 260,845 245,888 200,850 155,808"/>
<path fill="#0a0af0" d="M20 847V755L30 752V847zM105 847L155 808V847zM300 847L350 808 365 805V847zM395 847V805H410V847z"/>
<path fill="#ff10e0" d="M30 847V752L60 820 85 847zM155 847V808L195 847zM365 847V805H395V847z"/>
<path fill="#f21414" d="M200 850L225 885 245 888V850z"/>
<path fill="#14908e" d="M245 850V888L280 860V850z"/>
</g>
<rect x="28" y="840" width="1431" height="97" fill="url(#ws)"/>
<path d="M28 902.3H1460" stroke="#1010f0" stroke-width="2" fill="none"/>
<g fill="none" stroke-width="3.4" stroke-linejoin="round">
<g transform="translate(0,620) scale(.40816,.33333)">
<path stroke="#1a1440" d="M68 893L100 882M130 885L170 895M205 910L240 882 270 878 305 853M410 902L450 890 490 878M530 880L565 890 610 888 650 875 690 838M790 853L830 825 870 775 940 738M1030 775L1050 768M1170 825L1200 800 1250 750 1270 748M1340 760L1350 758"/>
<path stroke="#a000a8" d="M100 882L130 885M170 895L205 910M305 853L350 880 410 902M490 878L530 880M690 838L740 850 790 853M950 740L1000 770 1030 775M1050 768L1100 790 1170 825M1270 750L1340 760M1350 758L1370 755 1420 800 1470 815 1490 847 1510 880 1568 925"/>
<path stroke="#66f466" d="M70 945L100 920 150 912M220 930L270 915 310 892 340 892M440 912L560 895M610 905L680 880 750 865M785 872L850 850 900 775 940 755 980 752M1010 762L1100 755M1195 775L1240 745 1305 720"/>
<path stroke="#ff9a10" d="M150 915L220 930M340 892L410 912 440 912M560 895L610 905M750 865L785 872M980 752L1010 760M1100 752L1195 775M1305 720L1380 735 1470 775 1520 815 1568 860"/>
<path fill="#f0ee00" stroke="none" d="M966 750l24 0 -12 22zM1255 733l24 0 -12 22z"/><path fill="#00e8f0" stroke="none" d="M1240 760l24 0 -12 -24z"/>
</g>
<g transform="translate(640,620) scale(.43365,.33333)">
<path stroke="#1a1440" d="M25 942L60 930 85 860 105 835M200 840L240 835 270 825M340 872L400 845 460 825M570 855L620 870 700 855 800 855 880 865 920 830 985 825M1010 825L1050 805 1100 803 1140 745 1220 678M1330 805L1420 762M1475 812L1540 755"/>
<path stroke="#a000a8" d="M0 935L25 942M105 835L150 842 200 838M270 825L310 845 340 870M460 825L520 855M985 825L1010 825M1225 680L1270 790 1320 805M1425 762L1470 810M1545 755L1568 780"/>
<path stroke="#66f466" d="M75 900L140 845 155 845M220 868L300 855M365 868L475 828M640 865L705 855M885 875L970 840 1090 815 1225 690M1325 762L1430 722M1510 750L1568 735"/>
<path stroke="#ff9a10" d="M0 860L40 895 75 900M155 845L220 868M300 855L365 868M475 828L545 845 640 865M705 855L770 857 885 875M1225 690L1280 715 1325 762M1430 722L1510 750"/>
<path fill="#00e8f0" stroke="none" d="M64 908l24 0 -12 -24zM354 874l24 0 -12 -24zM533 857l24 0 -12 -24zM629 874l24 0 -12 -24zM759 867l24 0 -12 -24zM874 882l24 0 -12 -24z"/>
<path fill="#f0ee00" stroke="none" d="M306 847l24 0 -12 22zM468 822l24 0 -12 22zM563 847l24 0 -12 22zM693 845l24 0 -12 22zM793 852l24 0 -12 22zM1228 680l24 0 -12 22z"/>
</g>
<g transform="translate(1300,620) scale(.39154,.33333)">
<path stroke="#1a1440" d="M0 760L30 752M105 850L155 808M245 888L280 860M300 860L350 808"/>
<path stroke="#a000a8" d="M30 752L60 820 85 850 100 850M155 808L200 850 225 885 245 888M280 860L300 860M350 805L400 805"/>
<path stroke="#66f466" d="M0 750L30 733 50 735M135 805L175 790M260 845L300 842 330 825 403 808"/>
<path stroke="#ff9a10" d="M50 735L90 775 135 805M175 795L215 820 260 845"/>
<path fill="#00e8f0" stroke="none" d="M322 836l24 0 -12 -24z"/>
</g>
</g>

<!-- PANEL 4 -->
<g transform="translate(0,620) scale(.40816,.33333)">
<path fill="#b0ecff" d="M70 958H140V1125H70z"/>
<path fill="#ffff88" d="M140 958H212V1125H140zM228 958H296V1125H228zM314 958H468V1125H314zM502 958H553V1125H502zM571 958H657V1125H571zM708 958H811V1125H708zM985 958H1191V1125H985zM1294 958H1328V1125H1294zM1345 958H1379V1125H1345zM1414 958H1465V1125H1414z"/>
<path fill="#33ee44" d="M212 958H228V1125H212zM296 958H314V1125H296zM468 958H502V1125H468zM553 958H571V1125H553zM657 958H708V1125H657zM811 958H985V1125H811zM1191 958H1294V1125H1191zM1328 958H1345V1125H1328zM1379 958H1414V1125H1379zM1465 958H1551V1125H1465z"/>
<path fill="#660a0a" d="M1551 958H1568V1125H1551z"/>
</g>
<g transform="translate(640,620) scale(.43365,.33333)">
<path fill="#6464bc" d="M0 958H18V1125H0zM67 958H115V1125H67zM1167 958H1312V1125H1167zM1443 958H1476V1125H1443zM1508 958H1568V1125H1508z"/>
<path fill="#b0ecff" d="M18 958H67V1125H18zM115 958H196V1125H115zM1312 958H1443V1125H1312zM1476 958H1508V1125H1476z"/>
<path fill="#ffff88" d="M196 958H309V1125H196zM325 958H470V1125H325zM519 958H600V1125H519zM632 958H696V1125H632zM747 958H763V1125H747zM796 958H909V1125H796zM941 958H1022V1125H941zM1086 958H1102V1125H1086z"/>
<path fill="#33ee44" d="M309 958H325V1125H309zM470 958H519V1125H470zM600 958H632V1125H600zM696 958H747V1125H696zM763 958H796V1125H763zM909 958H941V1125H909zM1022 958H1086V1125H1022zM1102 958H1151V1125H1102z"/>
<path fill="#660a0a" d="M1151 958H1167V1125H1151z"/>
</g>
<g transform="translate(1300,620) scale(.39154,.33333)">
<path fill="#6464bc" d="M0 958H146V1125H0zM198 958H217V1125H198z"/>
<path fill="#b0ecff" d="M146 958H198V1125H146zM217 958H414V1125H217z"/>
</g>
<rect x="28" y="968" width="1432" height="27" fill="#000" fill-opacity=".16"/>
<g clip-path="url(#env)">
<rect x="28" y="939" width="1432" height="56" fill="#d22a20" fill-opacity=".78"/>
<g transform="translate(0,620) scale(.40816,.33333)" fill="#0a2ad0">
<path d="M210 958H228V1125H210zM295 958H314V1125H295zM465 958H502V1125H465zM553 958H571V1125H553zM657 958H708V1125H657zM808 958H985V1125H808zM1191 958H1294V1125H1191zM1328 958H1345V1125H1328zM1379 958H1414V1125H1379zM1465 958H1568V1125H1465z"/>
</g>
<g transform="translate(640,620) scale(.43365,.33333)" fill="#0a2ad0">
<path d="M0 958H15V1125H0zM65 958H115V1125H65zM305 958H325V1125H305zM468 958H515V1125H468zM597 958H645V1125H597zM693 958H745V1125H693zM760 958H796V1125H760zM905 958H938V1125H905zM1003 958H1085V1125H1003zM1100 958H1310V1125H1100zM1443 958H1476V1125H1443zM1505 958H1568V1125H1505z"/>
</g>
<g transform="translate(1300,620) scale(.39154,.33333)" fill="#0a2ad0">
<path d="M0 958H146V1125H0zM198 958H217V1125H198z"/>
</g>
<rect x="28" y="939" width="1432" height="56" fill="url(#ws2)"/>
</g>
<path d="M28 968.7H1459" stroke="#000" stroke-width="1.3" fill="none"/>

<!-- separators -->
<g fill="none" stroke="#7d97a3" stroke-width="1.5">
<path d="M28 630H1914M28 749H1914M28 836H1914M28 939H1914M28 995H1877"/>
<path d="M1877.5 22V1010" stroke-width="1.3"/>
</g>

<!-- panel headers -->
<rect class="leg" x="28" y="631" width="165" height="15"/><rect class="leg" x="28" y="750" width="89.5" height="15"/><rect class="leg" x="28" y="837" width="142.6" height="15"/><rect class="leg" x="28" y="940" width="191" height="15"/>
<g fill="#4d7fb0" stroke="#fff" stroke-width="1"><circle cx="35" cy="638.5" r="4.8"/><circle cx="35" cy="757.5" r="4.8"/><circle cx="35" cy="844.5" r="4.8"/><circle cx="35" cy="947.5" r="4.8"/></g>
<path d="M33 636.5l4 4M37 636.5l-4 4M33 755.5l4 4M37 755.5l-4 4M33 842.5l4 4M37 842.5l-4 4M33 945.5l4 4M37 945.5l-4 4" stroke="#fff" fill="none"/>
<path d="M43.5 631V646M43.5 750V765M43.5 837V852M43.5 940V955" stroke="#7d97a3" fill="none"/>
<rect x="47" y="634" width="8" height="9" fill="#222"/><rect x="47" y="753" width="8" height="9" fill="#6f8a94"/><rect x="47" y="840" width="8" height="9" fill="#6f8a94"/><rect x="47" y="943" width="8" height="9" fill="#222"/>
<g class="a"><text x="60" y="642" class="a">Sistema de trenes Doc v4 (f f)</text><text x="59" y="761" class="a">Willy Doc (t)</text><text x="59" y="848" class="a">Awesome Evolution Doc</text><text x="59" y="951" class="a">Barra Fuerza Fondo Mercado v4 (f)</text></g>

<!-- time axis -->
<g class="t">
<text class="t" x="96" y="1007">2010</text><text class="t" x="180" y="1007">2011</text><text class="t" x="264" y="1007">2012</text><text class="t" x="349" y="1007">2013</text><text class="t" x="433" y="1007">2014</text><text class="t" x="517" y="1007">2015</text><text class="t" x="601" y="1007">2016</text><text class="t" x="685.5" y="1007">2017</text><text class="t" x="770" y="1007">2018</text><text class="t" x="854" y="1007">2019</text><text class="t" x="938" y="1007">2020</text><text class="t" x="1023" y="1007">2021</text><text class="t" x="1107" y="1007">2022</text><text class="t" x="1191" y="1007">2023</text><text class="t" x="1276" y="1007">2024</text><text class="t" x="1360" y="1007">2025</text><text class="t" x="1444" y="1007">2026</text><text class="t" x="1528" y="1007">2027</text><text class="t" x="1613" y="1007">2028</text><text class="t" x="1697" y="1007">2029</text><text class="t" x="1781" y="1007">2030</text>
</g>
<path d="M97 995v3M181 995v3M265 995v3M349 995v3M433 995v3M517 995v3M601 995v3M685.5 995v3M770 995v3M854 995v3M938 995v3M1023 995v3M1107 995v3M1191 995v3M1276 995v3M1360 995v3M1444 995v3M1528 995v3M1613 995v3M1697 995v3M1781 995v3M1865 995v3" stroke="#333" fill="none"/>

<!-- right axis -->
<path fill="none" stroke="#222" d="M1877 33.5h4M1877 94.6h4M1877 155.7h4M1877 216.8h4M1877 277.9h4M1877 339h4M1877 400h4M1877 461h4M1877 522h4M1877 583h4M1877 640.7h4M1877 661.3h4M1877 682h4M1877 692h4M1877 702h4M1877 723h4M1877 744h4M1877 757h4M1877 775.7h4M1877 794h4M1877 813h4M1877 832h4M1877 842h4M1877 859h4M1877 889h4M1877 902h4M1877 923h4M1877 951h4M1877 959h4M1877 969h4M1877 983h4"/>
<g>
<text class="a" x="1884" y="37">170</text><text class="a" x="1884" y="98">160</text><text class="a" x="1884" y="159">150</text><text class="a" x="1884" y="220.5">140</text><text class="a" x="1884" y="281.5">130</text><text class="a" x="1884" y="342.5">120</text><text class="a" x="1884" y="403.5">110</text><text class="a" x="1884" y="464.5">100</text><text class="a" x="1884" y="525.5">90</text><text class="a" x="1884" y="586.5">80</text>
<text class="a" x="1884" y="685.5">60</text><text class="a" x="1884" y="705.5">40</text>
<text class="a" x="1884" y="845.5">30</text><text class="a" x="1884" y="862.5">20</text><text class="a" x="1884" y="926.5">-10</text>
<text class="a" x="1884" y="954">0,51</text><text class="a" x="1884" y="986.5">0,49</text>
<text class="a" x="1884" y="786">-40</text><text class="a" x="1884" y="805">-60</text>
<text class="a" x="1884" y="885">9,7484</text>
</g>
<g>
<rect class="b" x="1883" y="120" width="33" height="14"/><text x="1885" y="131" style="fill:#22bb22" class="a">154,833</text>
<rect class="b" x="1883" y="133" width="33" height="13"/><text x="1885" y="143" style="fill:#c01818" class="a">152,806</text>
<rect class="b" x="1883" y="159" width="33" height="13"/><text x="1885" y="169" style="fill:#1c1c9a" class="a">148,620</text>
<text class="a" x="1884" y="656">93,147</text>
<rect class="b" x="1882" y="631" width="18" height="14"/><text class="a" x="1884" y="641.5">100</text>
<rect x="1882" y="652" width="32" height="11" fill="#fff"/><rect class="b" x="1895" y="651" width="19" height="13"/><text class="a" x="1884" y="661">83,906</text>
<rect class="b" x="1882" y="661" width="13" height="13"/><text class="a" x="1884" y="670.5">80</text>
<rect class="b" x="1882" y="686" width="13" height="13"/><text x="1884" y="695.5" style="fill:#1515cc" class="a">50</text>
<rect class="b" x="1882" y="717" width="13" height="13"/><text class="a" x="1884" y="727.5">20</text>
<rect class="b" x="1882" y="737" width="8" height="13"/><text class="a" x="1883" y="746.5">0</text>
<rect class="b" x="1882" y="754" width="32" height="14"/><text x="1884" y="764.5" style="fill:#11bb11" class="a">-6,3697</text>
<rect class="b" x="1882" y="769" width="18" height="13"/><text x="1884" y="778.5" style="fill:#1515cc" class="a">-25</text>
<rect class="b" x="1882" y="788" width="18" height="13"/><text x="1884" y="797.5" style="fill:#1515cc" class="a">-50</text>
<rect class="b" x="1882" y="807" width="18" height="13"/><text x="1884" y="816.5" style="fill:#c01818" class="a">-75</text>
<rect class="b" x="1882" y="823" width="22" height="13"/><text class="a" x="1884" y="833.5">-100</text>
<rect class="b" x="1882" y="883" width="32" height="13"/><text x="1884" y="893" style="fill:#66dd66" class="a">6,1248</text>
<rect class="b" x="1882" y="902" width="8" height="13"/><text x="1883" y="911.5" style="fill:#1515cc" class="a">0</text>
<rect class="b" x="1882" y="953" width="30" height="13"/><text x="1884" y="962.5" style="fill:#e01818" class="a">0,5034</text>
<rect class="b" x="1882" y="965" width="30" height="13"/><text class="a" x="1884" y="974.5">0,5000</text>
</g>

<!-- bottom bar -->
<rect x="28" y="1010" width="1886" height="20" fill="#9cb8c4"/>
<path d="M28 1010H1914" stroke="#6f8c9a" stroke-width="1.5"/>
<rect x="148" y="1015" width="1617" height="11" fill="#9cb8c4" stroke="#6f8c9a"/>
<rect x="1108" y="1015.5" width="644" height="10" fill="#bcd8e4" stroke="#8aa5b2"/>
<rect x="148" y="1015" width="12" height="11" fill="#bcd8e4" stroke="#6f8c9a"/>
<rect x="1752" y="1015" width="13" height="11" fill="#bcd8e4" stroke="#6f8c9a"/>
<path d="M155.5 1018l-3 2.5 3 2.5M1757 1018l3 2.5 -3 2.5" stroke="#222" stroke-width="1.2" fill="none"/>
<text x="134" y="1024" style="font-size:12px;fill:#3a5a6a">«</text>
<!-- bottom left icons -->
<rect x="0" y="1010" width="28" height="20" fill="#9cb8c4"/>
<path d="M7 1026l3 -11 3 8 3 -8 2 8" stroke="#222" stroke-width="1.2" fill="none"/><path d="M14 1027l7 -14" stroke="#e0a010" stroke-width="2.2" fill="none"/>
<circle cx="32" cy="1020" r="2" fill="#fff" stroke="#567"/><circle cx="42" cy="1015" r="2" fill="#fff" stroke="#567"/><circle cx="42" cy="1026" r="2" fill="#fff" stroke="#567"/><path d="M32 1020L42 1015M32 1020L42 1026" stroke="#fff" fill="none"/>
<rect x="54" y="1014" width="9" height="12" fill="#3f83d8"/><rect x="57" y="1018" width="8" height="9" fill="#cfe6f6" stroke="#3f83d8"/>
<rect x="76" y="1014" width="9" height="13" fill="#fff" stroke="#555"/><path d="M78 1017h5M78 1020h5" stroke="#d03030" fill="none"/><path d="M78 1023h5" stroke="#2a9a2a" fill="none"/>
<path d="M100 1013v15" stroke="#333" stroke-width="1.2" fill="none"/><rect x="94" y="1015" width="13" height="4" fill="#38b838"/><rect x="96" y="1021" width="13" height="4" fill="#38b838"/>
<rect x="115" y="1013" width="11" height="9" fill="#e8f2ff" stroke="#2a6ac0"/><rect x="119" y="1018" width="11" height="10" fill="#fff" stroke="#2a6ac0"/><path d="M120 1026l3 -5 2 3 3 -4" stroke="#2a9a2a" fill="none"/>
<!-- bottom right icons -->
<path d="M1772 1017l4 -3v2h5q4 0 4 5t-4 6v-2q2 -1 2 -4t-3 -3h-4v2z" fill="#7fb0e0"/>
<path d="M1806 1017l-4 -3v2h-5q-4 0 -4 5t4 6v-2q-2 -1 -2 -4t3 -3h4v2z" fill="#7fb0e0"/>
<rect x="1823" y="1014" width="4" height="13" fill="#38b838" stroke="#222" stroke-width=".6"/><circle cx="1818" cy="1024" r="2.5" fill="none" stroke="#d03030" stroke-width="1.4"/><path d="M1819 1021l4 -4" stroke="#222" stroke-width="1.5" fill="none"/>
<circle cx="1842" cy="1018" r="4.5" fill="#e8f2ff" stroke="#222" stroke-width="1.2"/><path d="M1845 1022l3 4" stroke="#222" stroke-width="1.6" fill="none"/><path d="M1851 1013v9M1838 1028h6" stroke="#2a6ac0" stroke-width="1.2" fill="none"/>
<circle cx="1864" cy="1018" r="4.5" fill="#e8f2ff" stroke="#222" stroke-width="1.2"/><path d="M1867 1022l3 4" stroke="#222" stroke-width="1.6" fill="none"/><path d="M1862 1018h4" stroke="#1a3ad0" stroke-width="1.4" fill="none"/>
<circle cx="1886" cy="1018" r="4.5" fill="#e8f2ff" stroke="#222" stroke-width="1.2"/><path d="M1889 1022l3 4" stroke="#222" stroke-width="1.6" fill="none"/><path d="M1884 1018h4M1886 1016v4" stroke="#1a3ad0" stroke-width="1.4" fill="none"/>
<path d="M1903 1014h11" stroke="#444" stroke-width="2" stroke-dasharray="1.5 1.5" fill="none"/><path d="M1908 1018v7l-2 -2M1908 1025l2 -2" stroke="#2a6ac0" stroke-width="1.3" fill="none"/>

<!-- legend row -->
<rect class="leg" x="28" y="23" width="423" height="15"/>
<path d="M71.5 23V38M118.5 23V38M135.5 23V38M199.5 23V38M336.5 23V38" stroke="#8aa5b2" fill="none"/>
<rect x="31" y="26" width="8" height="9" fill="#fff" stroke="#8aa"/><path d="M35 27v5M33 30.5l2 3 2 -3" stroke="#e01818" stroke-width="1.6" fill="none"/>
<rect x="45" y="26" width="8" height="9" fill="#fff" stroke="#8aa"/><path d="M49 34v-5M47 30.5l2 -3 2 3" stroke="#18a018" stroke-width="1.6" fill="none"/>
<circle cx="62" cy="30.5" r="4.8" fill="#4d7fb0" stroke="#fff"/><path d="M60 28.5l4 4M64 28.5l-4 4" stroke="#fff" fill="none"/>
<rect x="76" y="26.5" width="7.5" height="8" fill="#f4f8fa" stroke="#8a9aa4"/><text x="87.5" y="34" class="a">Precio</text>
<path d="M123 27h1.5M123 30.5h1.5M123 34h1.5M126 27h5M126 30.5h5M126 34h5" stroke="#333" fill="none"/>
<rect x="139.5" y="26.5" width="7" height="8" fill="#f4f8fa" stroke="#8a9aa4"/><text x="151" y="34" class="a">Cierre (W)</text>
<rect x="203" y="26" width="8" height="9" fill="#6f8a94"/><text x="214.5" y="34" class="a">Tunel Domenec v4 (t t t t t)</text>
<path d="M340.5 26v9" stroke="#e02020" fill="none"/><path d="M342.5 26v9" stroke="#e0a010" fill="none"/><path d="M344.5 26v9" stroke="#18a018" fill="none"/><path d="M346.5 26v9" stroke="#1a1ad0" fill="none"/><path d="M348.5 26v9" stroke="#222" fill="none"/>
<text x="352" y="34" class="a">Control Total Doc v.6</text>

<!-- top toolbar -->
<rect x="0" y="0" width="1914" height="22" fill="url(#tb)"/>
<path d="M0 .5H1914" stroke="#5f7d8b"/><path d="M0 22.5H1914" stroke="#5f7d8b"/>
<path d="M21.5 1V22M39.5 1V22M95.5 1V22M335.5 1V22M381.5 1V22M476.5 1V22M559.5 1V22M657.5 1V22M1850.5 1V22M1870.5 1V22" stroke="#7f9dab" fill="none"/>
<path d="M7 9v8M12 7v8M17 5v7" stroke="#2a8a2a" stroke-width="3" fill="none"/>
<rect x="27" y="5" width="6" height="5" rx="2" fill="none" stroke="#6a7f8a" stroke-width="1.4"/><rect x="27" y="12" width="6" height="5" rx="2" fill="none" stroke="#6a7f8a" stroke-width="1.4"/>
<text x="44" y="14.5" class="a" textLength="36" lengthAdjust="spacingAndGlyphs">USDJPY</text><path d="M85 9.5l2.5 2.5 2.5 -2.5" stroke="#333" stroke-width="1.2" fill="none"/>
<g>
<rect class="btn" x="100.5" y="4.5" width="19" height="14" rx="2"/><rect class="btn" x="124.5" y="4.5" width="25.5" height="14" rx="2"/><rect class="btn" x="154" y="4.5" width="18" height="14" rx="2"/><rect class="btn" x="176" y="4.5" width="23" height="14" rx="2"/><rect class="btn" x="202.5" y="4.5" width="23" height="14" rx="2"/><rect class="btn" x="229" y="4.5" width="17" height="14" rx="2"/><rect class="btn" x="249.5" y="4.5" width="16" height="14" rx="2"/><rect class="btn" x="269" y="4.5" width="13" height="14" rx="2"/><rect class="btn" x="285" y="4.5" width="14" height="14" rx="2"/><rect class="on" x="303" y="4.5" width="12.5" height="14" rx="2"/><rect class="btn" x="320" y="4.5" width="12" height="14" rx="2"/>
<rect class="btn" x="386.5" y="4.5" width="20.5" height="14" rx="2"/><rect class="on" x="412" y="4.5" width="28" height="14" rx="2"/><rect class="btn" x="444" y="4.5" width="27" height="14" rx="2"/>
<text class="t" x="110" y="15">12s</text><text class="t" x="137" y="15">144s</text><text class="t" x="163" y="15">1m</text><text class="t" x="187.5" y="15">12m</text><text class="t" x="214" y="15">56m</text><text class="t" x="237.5" y="15">1h</text><text class="t" x="257.5" y="15">4h</text><text class="t" x="275.5" y="15">D</text><text class="t" x="292" y="15">W</text><text class="t" x="309" y="15">M</text><text class="t" x="326" y="15">Q</text>
<text class="a" x="341" y="14.5">1 mes</text><path d="M372 9.5l2.5 2.5 2.5 -2.5" stroke="#333" stroke-width="1.2" fill="none"/>
<text class="t" x="396.5" y="15">5kU</text><text class="t" x="426" y="15">10kU</text><text class="t" x="457.5" y="15">35kU</text>
<text class="a" x="481" y="14.5">10 k unidades</text><path d="M549 9.5l2.5 2.5 2.5 -2.5" stroke="#333" stroke-width="1.2" fill="none"/>
<path d="M565 7l5 -3 4 5 5 -3" stroke="#d04040" fill="none"/><path d="M565 10l5 2 4 -5 5 3" stroke="#40a040" fill="none"/><rect x="565" y="15" width="16" height="5" fill="#2a9a3a"/><rect x="570" y="15" width="3" height="3" fill="#d83030"/><rect x="576" y="15" width="3" height="3" fill="#d83030"/>
<text class="a" x="586" y="14.5">Indicadores</text><path d="M647.5 9.5l2.5 2.5 2.5 -2.5" stroke="#333" stroke-width="1.2" fill="none"/>
<rect x="665" y="6" width="8" height="10" fill="#eef4f6" stroke="#9ab"/><path d="M669 8v1M669 10.5v4" stroke="#667" stroke-width="1.4" fill="none"/>
<circle cx="687" cy="11" r="3.2" fill="#8a8f92"/>
<rect x="696" y="4.5" width="40" height="13" rx="2" fill="#55e655" stroke="#5ac05a"/><text x="716" y="14.5" text-anchor="middle" style="fill:#e8ffe8">+0,31 %</text>
<text class="a" x="740" y="14.5" textLength="52" lengthAdjust="spacingAndGlyphs">13 mar 2026</text>
<rect x="797" y="4.5" width="46" height="13" rx="3" fill="#4fb4e8" stroke="#3a8fc0"/><text x="820" y="14.5" text-anchor="middle" style="fill:#0c3f6a" class="t">USD/JPY</text>
<path d="M1853 11c0 -4 3 -6 7 -6v-2l3 3 -3 3v-2c-2 0 -4 2 -4 4h2l-3 4z" fill="#e02020"/>
<path d="M1867 12c0 4 -3 6 -7 6v2l-3 -3 3 -3v2c2 0 4 -2 4 -4h-2l3 -4z" fill="#18b018"/>
<path d="M1877 15h7" stroke="#7a97a5" stroke-width="2" fill="none"/><rect x="1890" y="9" width="6" height="6" fill="none" stroke="#7a97a5" stroke-width="1.2"/><rect x="1892" y="7" width="6" height="6" fill="none" stroke="#7a97a5" stroke-width="1.2"/><path d="M1903 7l8 8M1911 7l-8 8" stroke="#7a97a5" stroke-width="1.8" fill="none"/>
</g>

<!-- left sidebar -->
<rect x="0" y="22" width="28" height="988" fill="#9ab6c3"/>
<path d="M27.5 22V1010" stroke="#5f7d8b"/><path d="M.5 22V1030" stroke="#5f7d8b"/>
<path d="M11 31l3 -2.5 3 2.5" stroke="#8fa8b5" stroke-width="1.2" fill="none"/>
<rect x="3.5" y="34.5" width="22" height="22" rx="2" fill="#8ba6b3" stroke="#6f8c9a"/>
<path d="M11 38l8 9h-4l2 5 -2 1 -2 -5 -3 3z" fill="#b5c2ca" stroke="#5c7380" stroke-width=".8"/>
<g fill="none" stroke="#2a2a2a" stroke-width="1.2">
<circle cx="13" cy="66" r="4.5"/><path d="M16 70l4 4" stroke-width="1.8"/>
<circle cx="13.5" cy="88" r="4.5"/><path d="M17 92l4 4" stroke-width="1.8"/><rect x="6" y="88" width="9" height="8" stroke="#3a6ac8" stroke-dasharray="1.5 1.5" stroke-width="1"/>
</g>
<path d="M11 117c0 -8 1 -10 3 -10s3 2 3 10h3v2H8v-2z" fill="#f0e000" stroke="#7a7a00" stroke-width=".7"/><path d="M5 106h18" stroke="#222" fill="none"/>
<path d="M9 139c0 -9 2 -11 4 -11s4 2 4 11h3v2H6v-2z" fill="#f0e000" stroke="#7a7a00" stroke-width=".7"/>
<path d="M6 160l3 -8 3 8h8" stroke="#1a1ad0" fill="none" stroke-width="1.4"/><text x="19" y="164" style="font-size:9px;font-weight:bold;fill:#1a1ad0">F</text><path d="M12 156h10" stroke="#e08040" stroke-dasharray="2 2" fill="none"/>
<path d="M9 180h11" stroke="#e08040" stroke-dasharray="2 1.5" fill="none"/><path d="M9 178h11" stroke="#1a1ad0" stroke-dasharray="2 1.5" fill="none"/><text x="19" y="187" style="font-size:9px;font-weight:bold;fill:#1a1ad0">F</text>
<rect x="8" y="196" width="12" height="9" fill="none" stroke="#5a8ae8" stroke-width="1.2"/><path d="M8 205m-2 0h4M8 203v4M20 196m-2 0h4M20 194v4" stroke="#1a1ad0" fill="none"/>
<rect x="8" y="218" width="12" height="9" fill="#b0a0a8" stroke="#e01818" stroke-width="1.2"/><path d="M6 227h4M8 225v4M18 218h4M20 216v4" stroke="#1a1ad0" fill="none"/>
<path d="M10 251l9 -9" stroke="#111" stroke-width="2.2" fill="none"/><path d="M15 239h6v6z" fill="#111"/><circle cx="10" cy="251" r="2.2" fill="none" stroke="#222"/>
<rect x="8" y="259" width="13" height="13" rx="2" fill="#a9bcc8" stroke="#6a90e8" stroke-width="1.2"/><text x="14.5" y="269.5" text-anchor="middle" style="font-size:10px;font-weight:bold;fill:#111">T</text>
<circle cx="14" cy="287" r="7" fill="#a9bcc8" stroke="#6a90e8" stroke-width="1.2"/><text x="14" y="291" text-anchor="middle" style="font-size:10px;font-weight:bold;fill:#087d08">T</text>
<path d="M10 313l9 -8" stroke="#222" stroke-width="1.4" fill="none"/><circle cx="10" cy="313" r="2" fill="none" stroke="#222"/><circle cx="19" cy="305" r="2" fill="none" stroke="#222"/>
<g fill="none" stroke-width="2">
<path d="M13 332h10" stroke="#88ee66"/><path d="M13 353h10" stroke="#55cc55"/><path d="M13 376h10" stroke="#0b7d0b"/><path d="M13 398h10" stroke="#ee1818"/>
</g>
<g fill="#9ab6c3" stroke-width="1.2"><circle cx="14" cy="332" r="2" stroke="#88ee66"/><circle cx="14" cy="353" r="2" stroke="#55cc55"/><circle cx="14" cy="376" r="2" stroke="#0b7d0b"/><circle cx="14" cy="398" r="2" stroke="#ee1818"/></g>
<path d="M6 421l13 -11 4 4 -13 11z" fill="#a9bcc8" stroke="#444"/>
<rect x="6" y="430" width="17" height="20" fill="#88a99a"/><path d="M6 444l5 -5 3 2 4 -6 4 3" stroke="#6a6ae0" fill="none"/><path d="M6 431h17M6 449h17" stroke="#4a9a5a" stroke-dasharray="1 1" fill="none"/>
<g stroke-width="1.3"><ellipse cx="14" cy="464" rx="6" ry="5" fill="#a89098" stroke="#e01818"/><ellipse cx="14" cy="486" rx="6" ry="5" fill="#a89080" stroke="#9a6a2a"/><ellipse cx="14" cy="508" rx="6" ry="5" fill="#88a090" stroke="#0b7d0b"/><ellipse cx="14" cy="530" rx="6" ry="5" fill="#88b090" stroke="#18e018"/></g>
<path d="M6 470h3M7 468v4M19 459h3M21 457v4M6 492h3M7 490v4M19 481h3M21 479v4M6 514h3M7 512v4M19 503h3M21 501v4M6 536h3M7 534v4M19 525h3M21 523v4" stroke="#1a1ad0" fill="none"/>
<g fill="none" stroke-width="1.5"><path d="M5 562L23 542" stroke="#111"/><path d="M5 585L23 565" stroke="#38a838" stroke-width="1.8"/><path d="M5 607L23 587" stroke="#e01818" stroke-width="1.8"/></g>
<path d="M5 618.5H23" stroke="#111" stroke-width="1.2" fill="none"/>
<g fill="none" stroke-width="1.6"><path d="M5 640H23" stroke="#f09090"/><path d="M5 662H23" stroke="#30ee30"/><path d="M5 683.5H23" stroke="#0b7d0b"/><path d="M5 706H23" stroke="#ee1818"/><path d="M5 728H23" stroke="#6a9ae8"/><path d="M5 750H23" stroke="#10109e"/><path d="M14.5 763V782" stroke="#111"/></g>
<path d="M6 798l10 -10v10zM6 798h14" stroke="#d04040" fill="none" stroke-width="1.2"/><text x="17" y="795" style="font-size:8px;fill:#1a1ad0">a</text>
<circle cx="14" cy="815" r="6" fill="none" stroke="#e08030" stroke-width="1.3"/><text x="11" y="819" style="font-size:9px;fill:#1a1ad0">+</text>
<text x="5" y="836" style="font-size:7px;fill:#1a1ad0">3</text><text x="16" y="832" style="font-size:7px;fill:#1a1ad0">5</text><text x="7" y="845" style="font-size:7px;fill:#1a1ad0">2</text><text x="17" y="842" style="font-size:7px;fill:#1a1ad0">4</text>
<text x="15" y="859" style="font-size:8px;fill:#1a1ad0">b</text><text x="7" y="866" style="font-size:8px;fill:#1a1ad0">a</text><text x="16" y="870" style="font-size:8px;fill:#1a1ad0">c</text>
<path d="M7 881l4 5 10 -11 -9 16z" fill="#22a022" stroke="#0f700f" stroke-width=".6"/>
<path d="M7 901h4v9H7zM11 901l3 -6h2v4h5l-1 11h-9z" fill="#3ab03a"/>
<path d="M7 921l3 -3 4 4 4 -4 3 3 -4 4 4 4 -3 3 -4 -4 -4 4 -3 -3 4 -4z" fill="#ee1818"/>
<rect x="1" y="945" width="26" height="10" fill="#b4d0dc" stroke="#7f9dab"/><path d="M11 948.5l3 2.5 3 -2.5" stroke="#333" stroke-width="1.2" fill="none"/>
<circle cx="10" cy="963" r="3.5" fill="#1a9a1a"/><rect x="10" y="964" width="9" height="11" fill="#fff" stroke="#444"/><path d="M12 968l5 4" stroke="#d03030" fill="none"/><path d="M16 975l5 -4" stroke="#222" stroke-width="1.8" fill="none"/>
<path d="M9 997h2M13 997h2M17 997h2" stroke="#333" stroke-width="2" fill="none"/><path d="M11 1001l3 2.5 3 -2.5" stroke="#333" fill="none"/>
</svg>
</body></html>
